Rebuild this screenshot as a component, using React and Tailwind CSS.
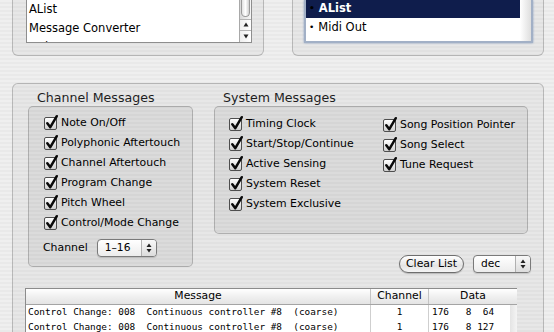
import React from 'react';

const channelItems = [
    'Note On/Off',
    'Polyphonic Aftertouch',
    'Channel Aftertouch',
    'Program Change',
    'Pitch Wheel',
    'Control/Mode Change',
];

const systemLeft = ['Timing Clock', 'Start/Stop/Continue', 'Active Sensing', 'System Reset', 'System Exclusive'];
const systemRight = ['Song Position Pointer', 'Song Select', 'Tune Request'];

const rows = [
    { msg: 'Control Change: 008  Continuous controller #8  (coarse)', ch: '1', data: '176   8  64' },
    { msg: 'Control Change: 008  Continuous controller #8  (coarse)', ch: '1', data: '176   8 127' },
];

const Check = () => (
    <span className="relative w-[13px] h-[13px] shrink-0 rounded-[2px] border border-[#4e4e4e] bg-[linear-gradient(#ffffff,#d0d0d0)]">
        <svg className="absolute -top-[3px] left-[0px] overflow-visible" width="14" height="15" viewBox="0 0 14 15">
            <path d="M2.3 8.3 L5.3 12.2 L11.8 1.2" fill="none" stroke="#0a0a0a" strokeWidth="2.5" strokeLinecap="round" strokeLinejoin="round" />
        </svg>
    </span>
);

const CheckRow = ({ label }) => (
    <div className="h-[20px] flex items-center gap-[4px]">
        <Check />
        <span className="text-[10.9px] text-black leading-none">{label}</span>
    </div>
);

const Arrows = () => (
    <svg width="6" height="10" viewBox="0 0 6 10">
        <path d="M3 0.5 L5.5 4 L0.5 4 Z" fill="#222" />
        <path d="M3 9.5 L5.5 6 L0.5 6 Z" fill="#222" />
    </svg>
);

const Popup = ({ value, width }) => (
    <div className={`${width} h-[18px] flex items-stretch rounded-[4px] border border-[#7a7a7a] bg-[linear-gradient(#ffffff,#ececec)] shadow-[0_1px_1px_rgba(0,0,0,0.15)]`}>
        <span className="flex-1 flex items-center pl-[7px] text-[10.7px] text-black leading-none">{value}</span>
        <span className="w-[15px] flex items-center justify-center border-l border-[#b0b0b0] bg-[linear-gradient(#f8f8f8,#dcdcdc)] rounded-r-[3px]">
            <Arrows />
        </span>
    </div>
);

const App = () => {
    return (
        <div className="w-[554px] h-[332px] overflow-hidden flex flex-col font-['DejaVu_Sans',sans-serif] bg-[image:repeating-linear-gradient(to_bottom,#efefef_0px,#efefef_2px,#e9e9e9_2px,#e9e9e9_4px)]">
            {/* top two panes */}
            <div className="flex h-[56px] shrink-0">
                <div className="ml-[12px] w-[252px] h-[56px] border border-t-0 border-black/20 rounded-b-[6px] bg-black/[0.03] pl-[13px] pr-[11px] pb-[12px]">
                    <div className="h-full flex border border-t-0 border-[#8e8e8e] bg-white">
                        <div className="flex-1 overflow-hidden text-[11.5px] text-black">
                            <div className="h-[19px] flex items-center pl-[2px]">AList</div>
                            <div className="h-[19px] flex items-center pl-[2px]">Message Converter</div>
                            <div className="h-[19px] flex items-center pl-[2px]">Delay</div>
                        </div>
                        <div className="w-[12px] flex flex-col border-l border-[#a8a8a8] bg-[linear-gradient(to_right,#d9d9d9,#f6f6f6)]">
                            <div className="h-[17px] mx-[1px] rounded-b-full bg-[linear-gradient(to_right,#e2e2e2,#ffffff_50%,#cfcfcf)] border border-t-0 border-[#9a9a9a]"></div>
                            <div className="mt-[2px] h-[12px] flex items-center justify-center border-t border-[#b4b4b4] bg-[linear-gradient(to_right,#eeeeee,#ffffff)]">
                                <svg width="6" height="5" viewBox="0 0 6 5"><path d="M3 0.5 L5.5 4.5 L0.5 4.5 Z" fill="#222" /></svg>
                            </div>
                            <div className="h-[12px] flex items-center justify-center border-t border-[#b4b4b4] bg-[linear-gradient(to_right,#eeeeee,#ffffff)]">
                                <svg width="6" height="5" viewBox="0 0 6 5"><path d="M3 4.5 L5.5 0.5 L0.5 0.5 Z" fill="#222" /></svg>
                            </div>
                        </div>
                    </div>
                </div>
                <div className="ml-[28px] w-[252px] h-[56px] border border-t-0 border-black/20 rounded-b-[6px] bg-black/[0.03] pl-[11px] pr-[10px] pb-[12px]">
                    <div className="h-full flex border-2 border-t-0 border-[#a2b0c6] bg-white shadow-[0_0_2px_#8aa0c0]">
                        <div className="flex-1 text-[11.5px]">
                            <div className="h-[18px] flex items-center gap-[4px] pl-[3px] bg-[#0f1d4c] text-white font-bold">
                                <span className="text-black text-[9px]">•</span>
                                <span>AList</span>
                            </div>
                            <div className="h-[20px] flex items-center gap-[4px] pl-[3px] text-black">
                                <span className="text-[9px]">•</span>
                                <span>Midi Out</span>
                            </div>
                        </div>
                        <div className="w-[11px] bg-[linear-gradient(to_right,#ffffff,#dedede)]"></div>
                    </div>
                </div>
            </div>

            {/* filter group */}
            <div className="mt-[27px] ml-[12px] w-[532px] h-[300px] shrink-0 border border-black/20 rounded-[6px] bg-black/[0.03]">
                <div className="flex pl-[15px] pt-[6px]">
                    <div className="w-[165px] flex flex-col">
                        <div className="h-[16px] pl-[9px] text-[12.6px] leading-[16px] text-[#1e1e1e]">Channel Messages</div>
                        <div className="h-[161px] border border-black/20 rounded-[5px] bg-black/[0.05] pt-[6px] pl-[15px] flex flex-col">
                            {channelItems.map((it) => (
                                <CheckRow key={it} label={it} />
                            ))}
                            <div className="mt-[5px] h-[20px] -ml-[1px] flex items-center gap-[9px]">
                                <span className="text-[10.9px] text-black">Channel</span>
                                <Popup value="1–16" width="w-[60px]" />
                            </div>
                        </div>
                    </div>
                    <div className="ml-[21px] w-[314px] flex flex-col">
                        <div className="h-[16px] pl-[9px] text-[12.6px] leading-[16px] text-[#1e1e1e]">System Messages</div>
                        <div className="h-[128px] border border-black/20 rounded-[5px] bg-black/[0.05] pt-[7px] pl-[14px] flex">
                            <div className="w-[154px] flex flex-col">
                                {systemLeft.map((it) => (
                                    <CheckRow key={it} label={it} />
                                ))}
                            </div>
                            <div className="mt-[1px] flex flex-col">
                                {systemRight.map((it) => (
                                    <CheckRow key={it} label={it} />
                                ))}
                            </div>
                        </div>
                        <div className="mt-[21px] -mr-[3px] h-[18px] flex justify-end gap-[9px]">
                            <button className="w-[65px] h-[18px] rounded-full border border-[#6e6e6e] bg-[linear-gradient(#ffffff,#e4e4e4_60%,#f4f4f4)] text-[10.9px] text-black leading-none shadow-[0_1px_1px_rgba(0,0,0,0.2)]">
                                Clear List
                            </button>
                            <Popup value="dec" width="w-[58px]" />
                        </div>
                    </div>
                </div>

                {/* message table */}
                <div className="mt-[15px] ml-[12px] w-[492px] border-t border-l border-[#8c8c8c] bg-white">
                    <div className="h-[16px] flex border-b border-[#a4a4a4] bg-[linear-gradient(#ffffff,#f0f0f0_50%,#e4e4e4)] text-[10.8px] text-black">
                        <div className="w-[345px] flex items-center justify-center border-r border-[#c4c4c4]">Message</div>
                        <div className="w-[58px] flex items-center justify-center border-r border-[#c4c4c4]">Channel</div>
                        <div className="flex-1 flex items-center justify-center">Data</div>
                    </div>
                    <div className="flex">
                        <div className="flex-1 flex flex-col font-['DejaVu_Sans_Mono',monospace] text-[9.4px] text-black">
                            {rows.map((r, i) => (
                                <div key={i} className="h-[15px] flex">
                                    <div className="w-[345px] flex items-center pl-[2px] border-r border-[#cfcfcf] whitespace-pre">{r.msg}</div>
                                    <div className="w-[58px] flex items-center justify-center border-r border-[#cfcfcf]">{r.ch}</div>
                                    <div className="flex-1 flex items-center pl-[3px] whitespace-pre">{r.data}</div>
                                </div>
                            ))}
                        </div>
                        <div className="w-[7px] bg-[linear-gradient(to_right,#e4e4e4,#f4f4f4)]"></div>
                    </div>
                </div>
            </div>
        </div>
    );
};

export default App;
